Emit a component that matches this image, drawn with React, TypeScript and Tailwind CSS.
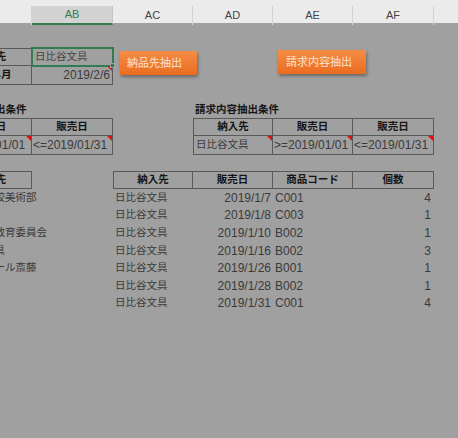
import React from 'react';

const GRID = 'grid grid-cols-[32px_81px_80px_80px_80px_81px_1fr] h-[17.6px]';

// Red comment marker in the top-right corner of a cell
const Tri = () => (
  <span className="absolute right-0 top-0 w-0 h-0 border-l-[5px] border-l-transparent border-t-[5px] border-t-[#e01010]" />
);

interface CellProps {
  className?: string;
  children?: React.ReactNode;
  tri?: boolean;
}

const Cell: React.FC<CellProps> = ({ className = '', children, tri }) => (
  <div className={`relative flex items-center whitespace-nowrap ${className}`}>
    {children}
    {tri && <Tri />}
  </div>
);

// Column AA sits mostly off-screen: its content is an 81px block anchored to the right edge
const AA: React.FC<CellProps> = ({ className = '', children, tri }) => (
  <div className={`relative flex justify-end whitespace-nowrap ${className}`}>
    <div className="w-[81px] shrink-0 flex items-center">{children}</div>
    {tri && <Tri />}
  </div>
);

const Row = ({ children }: { children?: React.ReactNode }) => <div className={GRID}>{children}</div>;

const jp = 'text-[10.5px]';
const head = 'text-[10.5px] font-bold text-[#151515]';

const lines = [
  { left: '日比谷高校美術部', date: '2019/1/7', code: 'C001', qty: 4 },
  { left: '', date: '2019/1/8', code: 'C003', qty: 1 },
  { left: '千代田区教育委員会', date: '2019/1/10', code: 'B002', qty: 1 },
  { left: '日比谷文具', date: '2019/1/16', code: 'B002', qty: 3 },
  { left: '書道スクール斎藤', date: '2019/1/26', code: 'B001', qty: 1 },
  { left: '', date: '2019/1/28', code: 'B002', qty: 1 },
  { left: '', date: '2019/1/31', code: 'C001', qty: 4 },
];

const App: React.FC = () => {
  return (
    <div className="relative w-[458px] h-[438px] overflow-hidden bg-[#a0a0a0] text-[12px] text-[#3a3a3a] font-['Liberation_Sans','Noto_Sans_CJK_JP',sans-serif]">
      {/* column headers */}
      <div className="grid grid-cols-[32px_81px_80px_80px_80px_81px_1fr] h-[23px] bg-[#ebebeb] text-[11px] text-[#444]">
        <div className="mt-[6px] border-r border-[#d2d2d2]" />
        <div className="mt-[6px] flex items-center justify-center bg-[#d3d3d3] border-r border-[#c4c4c4] border-b-2 border-b-[#2f7d50] text-[#2f7d50]">AB</div>
        <div className="mt-[6px] flex items-center justify-center border-r border-[#d2d2d2]">AC</div>
        <div className="mt-[6px] flex items-center justify-center border-r border-[#d2d2d2]">AD</div>
        <div className="mt-[6px] flex items-center justify-center border-r border-[#d2d2d2]">AE</div>
        <div className="mt-[6px] flex items-center justify-center border-r border-[#d2d2d2]">AF</div>
        <div className="mt-[6px]" />
      </div>

      <div className="h-[25px]" />

      {/* delivery target / date */}
      <Row>
        <AA className="border-t border-r border-b border-[#595959]">
          <span className={`w-full text-center ${head}`}>納品先</span>
        </AA>
        <Cell className="border-t border-r border-b border-[#595959] outline-2 outline-[#2f7d50] -outline-offset-1">
          <span className={`pl-[3px] ${jp} text-[#444]`}>日比谷文具</span>
          <span className="absolute -right-[3px] -bottom-[3px] w-[5px] h-[5px] bg-[#2f7d50] border border-[#a0a0a0] z-10" />
        </Cell>
      </Row>
      <Row>
        <AA className="border-r border-b border-[#595959]">
          <span className={`w-full text-center ${head}`}>請求年月</span>
        </AA>
        <Cell className="border-r border-b border-[#595959] justify-end pr-[2px]" tri>
          2019/2/6
        </Cell>
      </Row>

      <Row />

      {/* condition titles */}
      <Row>
        <AA>
          <span className={`pl-[2px] ${head}`}>納品先抽出条件</span>
        </AA>
        <div />
        <div />
        <Cell>
          <span className={`pl-[2px] ${head}`}>請求内容抽出条件</span>
        </Cell>
      </Row>
      <Row>
        <AA className="border-t border-r border-b border-[#595959]">
          <span className={`w-full text-center ${head}`}>販売日</span>
        </AA>
        <Cell className="border-t border-r border-b border-[#595959] justify-center">
          <span className={head}>販売日</span>
        </Cell>
        <div />
        <Cell className="border-l border-t border-r border-b border-[#595959] justify-center">
          <span className={head}>納入先</span>
        </Cell>
        <Cell className="border-t border-r border-b border-[#595959] justify-center">
          <span className={head}>販売日</span>
        </Cell>
        <Cell className="border-t border-r border-b border-[#595959] justify-center">
          <span className={head}>販売日</span>
        </Cell>
      </Row>
      <Row>
        <AA className="border-r border-b border-[#595959]" tri>
          <span className="pl-[1px]">&gt;=2019/01/01</span>
        </AA>
        <Cell className="border-r border-b border-[#595959] pl-[1px]" tri>
          &lt;=2019/01/31
        </Cell>
        <div />
        <Cell className="border-l border-r border-b border-[#595959] pl-[2px]" tri>
          <span className={jp}>日比谷文具</span>
        </Cell>
        <Cell className="border-r border-b border-[#595959] pl-[1px]" tri>
          &gt;=2019/01/01
        </Cell>
        <Cell className="border-r border-b border-[#595959] pl-[1px]" tri>
          &lt;=2019/01/31
        </Cell>
      </Row>

      <Row />

      {/* result lists */}
      <Row>
        <AA className="border-t border-r border-b border-[#595959]">
          <span className={`w-full text-center ${head}`}>納入先</span>
        </AA>
        <div />
        <Cell className="border-l border-t border-r border-b border-[#595959] justify-center">
          <span className={head}>納入先</span>
        </Cell>
        <Cell className="border-t border-r border-b border-[#595959] justify-center">
          <span className={head}>販売日</span>
        </Cell>
        <Cell className="border-t border-r border-b border-[#595959] justify-center">
          <span className={head}>商品コード</span>
        </Cell>
        <Cell className="border-t border-r border-b border-[#595959] justify-center">
          <span className={head}>個数</span>
        </Cell>
      </Row>
      {lines.map((l, i) => (
        <Row key={i}>
          <AA>
            <span className={`pl-[1.5px] ${jp}`}>{l.left}</span>
          </AA>
          <div />
          <Cell className="pl-[2px]">
            <span className={jp}>日比谷文具</span>
          </Cell>
          <Cell className="justify-end pr-[2px]">{l.date}</Cell>
          <Cell className="pl-[2px]">{l.code}</Cell>
          <Cell className="justify-end pr-[3px]">{l.qty}</Cell>
        </Row>
      ))}

      {/* buttons (shapes floating over the sheet) */}
      <button className="absolute left-[120px] top-[51px] w-[77px] h-[24px] flex items-center pl-[7px] bg-gradient-to-b from-[#f68d45] to-[#e96c1e] text-[11px] text-[#fde3cf] shadow-[1px_2px_3px_rgba(0,0,0,0.35)]">
        納品先抽出
      </button>
      <button className="absolute left-[278px] top-[50px] w-[88px] h-[24px] flex items-center pl-[8px] bg-gradient-to-b from-[#f68d45] to-[#e96c1e] text-[11px] text-[#fde3cf] shadow-[1px_2px_3px_rgba(0,0,0,0.35)]">
        請求内容抽出
      </button>
    </div>
  );
};

export default App;
